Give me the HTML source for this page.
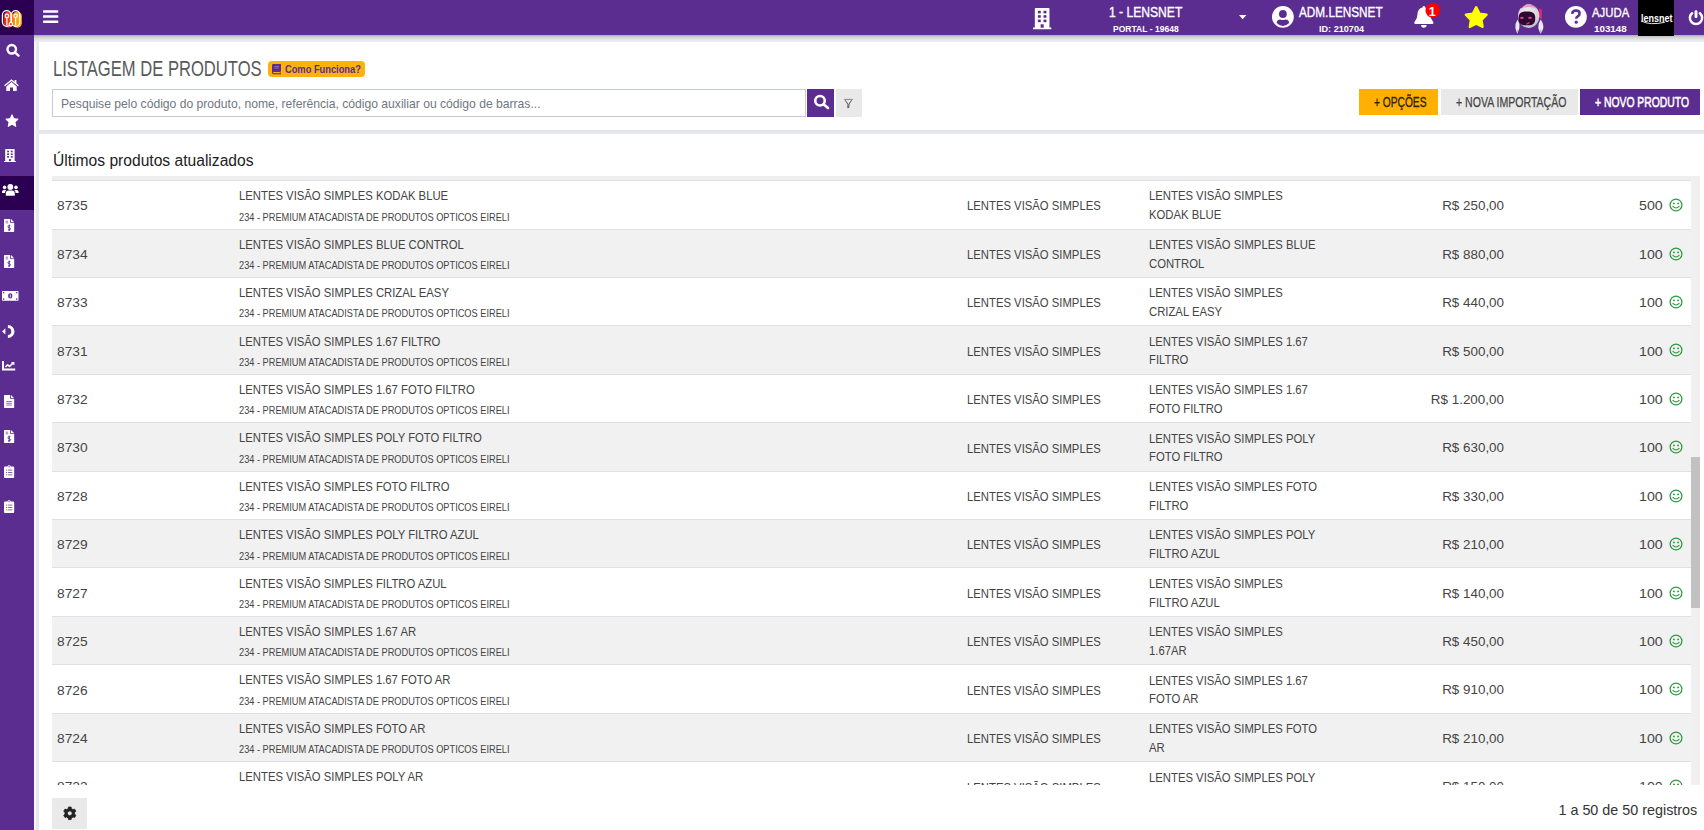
<!DOCTYPE html><html lang="pt-BR"><head><meta charset="utf-8"><title>Listagem de Produtos</title><style>
*{box-sizing:border-box}
html,body{margin:0;padding:0}
body{width:1704px;height:830px;overflow:hidden;position:relative;background:#fff;font-family:"Liberation Sans",sans-serif;}
.t{position:absolute;white-space:nowrap;line-height:1;transform-origin:0 0;display:block}
.a{position:absolute}
svg{position:absolute;overflow:visible}
</style></head><body>
<div class="a" style="left:34px;top:35px;width:1670px;height:795px;background:#fff"></div>
<div class="a" style="left:34px;top:35px;width:5px;height:795px;background:linear-gradient(90deg,#f8faf9 0,#f5f7f6 38%,#e7e9ed 46%,#e8eaee 100%)"></div>
<div class="a" style="left:39px;top:130.4px;width:1665px;height:3.7px;background:linear-gradient(180deg,#e1e2e7,#e9eaee)"></div>
<div class="a" style="left:34px;top:35px;width:1670px;height:7px;background:linear-gradient(180deg,#adb0ae 0,#c4c7c6 22%,#dcdee0 50%,#e8e9ec 80%,#f0f1f4 100%)"></div>
<div class="a" style="left:267.5px;top:61.3px;width:97.5px;height:15.8px;background:#fdb10a;border-radius:4px"></div>
<svg style="left:272px;top:63.7px" width="9" height="10.2" viewBox="0 0 9 10.2"><path d="M1.4 0H9V7.6H8.4V9H9V10.2H1.4A1.4 1.4 0 0 1 0 8.8V1.4A1.4 1.4 0 0 1 1.4 0Z" fill="#5b2d90"/><rect x="1.2" y="8" width="6.6" height="1.2" fill="#fdb10a"/><rect x="2.4" y="2" width="4.6" height="0.9" fill="#9a6aa8"/><rect x="2.4" y="3.6" width="4.6" height="0.9" fill="#9a6aa8"/></svg>
<div class="a" style="left:52.4px;top:89.2px;width:753.6px;height:27.4px;border:1px solid #c6ccd4;background:#fff"></div>
<div class="a" style="left:807.3px;top:89px;width:27px;height:27.7px;background:#5b2d90"></div>
<svg style="left:807px;top:89px" width="28" height="28" viewBox="807 89 28 28"><circle cx="820" cy="100.7" r="4.75" fill="none" stroke="#fff" stroke-width="2.6"/><path d="M823.6 104.3L828 108" stroke="#fff" stroke-width="2.6" stroke-linecap="round"/></svg>
<div class="a" style="left:836.2px;top:89px;width:25.8px;height:27.7px;background:#e9e9e9"></div>
<svg style="left:836px;top:89px" width="27" height="28" viewBox="836 89 27 28"><path d="M844.2 99.4H852.8" stroke="#777" stroke-width="0.9" fill="none"/><path d="M845.2 100.2L847.9 104.2V108L848.9 107.3V104.2L851.6 100.2" stroke="#4a4a4a" stroke-width="0.95" fill="none" stroke-linejoin="round"/></svg>
<div class="a" style="left:1358.9px;top:88.9px;width:78.8px;height:26px;background:#ffb000"></div>
<div class="a" style="left:1441px;top:88.9px;width:137px;height:26px;background:#e9e9e9"></div>
<div class="a" style="left:1580px;top:88.9px;width:119.5px;height:26px;background:#5b2d90"></div>
<span class="t" style="top:58px;font-size:22.5px;color:#5a5a5a;left:53.00px;transform:scaleX(0.7372);">LISTAGEM DE PRODUTOS</span>
<span class="t" style="top:64px;font-size:11.5px;color:#5b2d90;font-weight:700;left:284.50px;transform:scaleX(0.8072);">Como Funciona?</span>
<span class="t" style="top:97px;font-size:13px;color:#6f7780;left:60.60px;transform:scaleX(0.9332);">Pesquise pelo código do produto, nome, referência, código auxiliar ou código de barras...</span>
<span class="t" style="top:95px;font-size:14.5px;color:#2a2200;-webkit-text-stroke:0.3px #2a2200;left:1373.90px;transform:scaleX(0.7043);">+ OPÇÕES</span>
<span class="t" style="top:95px;font-size:14.5px;color:#444;-webkit-text-stroke:0.25px #444;left:1456.00px;transform:scaleX(0.7270);">+ NOVA IMPORTAÇÃO</span>
<span class="t" style="top:95px;font-size:14.5px;color:#fff;-webkit-text-stroke:0.55px #fff;left:1594.70px;transform:scaleX(0.7150);">+ NOVO PRODUTO</span>
<span class="t" style="top:153px;font-size:16px;color:#222;left:52.80px;transform:scaleX(0.9760);">Últimos produtos atualizados</span>
<span class="t" style="top:803px;font-size:14.5px;color:#333;right:6.80px;transform-origin:100% 0;transform:scaleX(0.9896);">1 a 50 de 50 registros</span>
<div class="a" style="left:52px;top:176.2px;width:1638.8px;height:4.4px;background:#efeff0;border-bottom:1px solid #dcdfe4"></div>
<div class="a" style="left:0;top:181.15px;width:1704px;height:603.85px;overflow:hidden">
<div class="a" style="left:52px;top:0.0px;width:1639px;height:48.42px;background:#fff;border-bottom:1px solid #dde1e6"></div>
<span class="t" style="top:17.85px;font-size:13.5px;color:#444;left:56.70px;transform:scaleX(1.0200);">8735</span>
<span class="t" style="top:8.85px;font-size:12.8px;color:#444;left:238.80px;transform:scaleX(0.8830);">LENTES VISÃO SIMPLES KODAK BLUE</span>
<span class="t" style="top:30.85px;font-size:11px;color:#444;left:238.80px;transform:scaleX(0.8386);">234 - PREMIUM ATACADISTA DE PRODUTOS OPTICOS EIRELI</span>
<span class="t" style="top:18.85px;font-size:12.8px;color:#444;left:966.90px;transform:scaleX(0.8830);">LENTES VISÃO SIMPLES</span>
<span class="t" style="top:8.85px;font-size:12.8px;color:#444;left:1148.80px;transform:scaleX(0.8830);">LENTES VISÃO SIMPLES</span>
<span class="t" style="top:27.85px;font-size:12.8px;color:#444;left:1148.80px;transform:scaleX(0.8830);">KODAK BLUE</span>
<span class="t" style="top:17.85px;font-size:13px;color:#444;right:200.40px;transform-origin:100% 0;transform:scaleX(1.0300);">R$ 250,00</span>
<span class="t" style="top:17.85px;font-size:13px;color:#444;right:41.50px;transform-origin:100% 0;transform:scaleX(1.0900);">500</span>
<svg style="left:1669.10px;top:17.00px" width="14" height="14" viewBox="-7 -7 14 14"><circle r="5.9" fill="none" stroke="#2f9a41" stroke-width="1.25"/><circle cx="-2.1" cy="-1.6" r="0.95" fill="#2f9a41"/><circle cx="2.1" cy="-1.6" r="0.95" fill="#2f9a41"/><path d="M-3.1 1.3Q0 4.6 3.1 1.3" fill="none" stroke="#2f9a41" stroke-width="1.15" stroke-linecap="round"/></svg>
<div class="a" style="left:52px;top:48.42px;width:1639px;height:48.42px;background:#f1f1f1;border-bottom:1px solid #dde1e6"></div>
<span class="t" style="top:66.85px;font-size:13.5px;color:#444;left:56.70px;transform:scaleX(1.0200);">8734</span>
<span class="t" style="top:57.85px;font-size:12.8px;color:#444;left:238.80px;transform:scaleX(0.8830);">LENTES VISÃO SIMPLES BLUE CONTROL</span>
<span class="t" style="top:78.85px;font-size:11px;color:#444;left:238.80px;transform:scaleX(0.8386);">234 - PREMIUM ATACADISTA DE PRODUTOS OPTICOS EIRELI</span>
<span class="t" style="top:67.85px;font-size:12.8px;color:#444;left:966.90px;transform:scaleX(0.8830);">LENTES VISÃO SIMPLES</span>
<span class="t" style="top:57.85px;font-size:12.8px;color:#444;left:1148.80px;transform:scaleX(0.8830);">LENTES VISÃO SIMPLES BLUE</span>
<span class="t" style="top:76.85px;font-size:12.8px;color:#444;left:1148.80px;transform:scaleX(0.8830);">CONTROL</span>
<span class="t" style="top:66.85px;font-size:13px;color:#444;right:200.40px;transform-origin:100% 0;transform:scaleX(1.0300);">R$ 880,00</span>
<span class="t" style="top:66.85px;font-size:13px;color:#444;right:41.50px;transform-origin:100% 0;transform:scaleX(1.0900);">100</span>
<svg style="left:1669.10px;top:65.42px" width="14" height="14" viewBox="-7 -7 14 14"><circle r="5.9" fill="none" stroke="#2f9a41" stroke-width="1.25"/><circle cx="-2.1" cy="-1.6" r="0.95" fill="#2f9a41"/><circle cx="2.1" cy="-1.6" r="0.95" fill="#2f9a41"/><path d="M-3.1 1.3Q0 4.6 3.1 1.3" fill="none" stroke="#2f9a41" stroke-width="1.15" stroke-linecap="round"/></svg>
<div class="a" style="left:52px;top:96.84px;width:1639px;height:48.42px;background:#fff;border-bottom:1px solid #dde1e6"></div>
<span class="t" style="top:114.85px;font-size:13.5px;color:#444;left:56.70px;transform:scaleX(1.0200);">8733</span>
<span class="t" style="top:105.85px;font-size:12.8px;color:#444;left:238.80px;transform:scaleX(0.8830);">LENTES VISÃO SIMPLES CRIZAL EASY</span>
<span class="t" style="top:126.85px;font-size:11px;color:#444;left:238.80px;transform:scaleX(0.8386);">234 - PREMIUM ATACADISTA DE PRODUTOS OPTICOS EIRELI</span>
<span class="t" style="top:115.85px;font-size:12.8px;color:#444;left:966.90px;transform:scaleX(0.8830);">LENTES VISÃO SIMPLES</span>
<span class="t" style="top:105.85px;font-size:12.8px;color:#444;left:1148.80px;transform:scaleX(0.8830);">LENTES VISÃO SIMPLES</span>
<span class="t" style="top:124.85px;font-size:12.8px;color:#444;left:1148.80px;transform:scaleX(0.8830);">CRIZAL EASY</span>
<span class="t" style="top:114.85px;font-size:13px;color:#444;right:200.40px;transform-origin:100% 0;transform:scaleX(1.0300);">R$ 440,00</span>
<span class="t" style="top:114.85px;font-size:13px;color:#444;right:41.50px;transform-origin:100% 0;transform:scaleX(1.0900);">100</span>
<svg style="left:1669.10px;top:113.84px" width="14" height="14" viewBox="-7 -7 14 14"><circle r="5.9" fill="none" stroke="#2f9a41" stroke-width="1.25"/><circle cx="-2.1" cy="-1.6" r="0.95" fill="#2f9a41"/><circle cx="2.1" cy="-1.6" r="0.95" fill="#2f9a41"/><path d="M-3.1 1.3Q0 4.6 3.1 1.3" fill="none" stroke="#2f9a41" stroke-width="1.15" stroke-linecap="round"/></svg>
<div class="a" style="left:52px;top:145.26px;width:1639px;height:48.42px;background:#f1f1f1;border-bottom:1px solid #dde1e6"></div>
<span class="t" style="top:163.85px;font-size:13.5px;color:#444;left:56.70px;transform:scaleX(1.0200);">8731</span>
<span class="t" style="top:154.85px;font-size:12.8px;color:#444;left:238.80px;transform:scaleX(0.8830);">LENTES VISÃO SIMPLES 1.67 FILTRO</span>
<span class="t" style="top:175.85px;font-size:11px;color:#444;left:238.80px;transform:scaleX(0.8386);">234 - PREMIUM ATACADISTA DE PRODUTOS OPTICOS EIRELI</span>
<span class="t" style="top:164.85px;font-size:12.8px;color:#444;left:966.90px;transform:scaleX(0.8830);">LENTES VISÃO SIMPLES</span>
<span class="t" style="top:154.85px;font-size:12.8px;color:#444;left:1148.80px;transform:scaleX(0.8830);">LENTES VISÃO SIMPLES 1.67</span>
<span class="t" style="top:172.85px;font-size:12.8px;color:#444;left:1148.80px;transform:scaleX(0.8830);">FILTRO</span>
<span class="t" style="top:163.85px;font-size:13px;color:#444;right:200.40px;transform-origin:100% 0;transform:scaleX(1.0300);">R$ 500,00</span>
<span class="t" style="top:163.85px;font-size:13px;color:#444;right:41.50px;transform-origin:100% 0;transform:scaleX(1.0900);">100</span>
<svg style="left:1669.10px;top:162.26px" width="14" height="14" viewBox="-7 -7 14 14"><circle r="5.9" fill="none" stroke="#2f9a41" stroke-width="1.25"/><circle cx="-2.1" cy="-1.6" r="0.95" fill="#2f9a41"/><circle cx="2.1" cy="-1.6" r="0.95" fill="#2f9a41"/><path d="M-3.1 1.3Q0 4.6 3.1 1.3" fill="none" stroke="#2f9a41" stroke-width="1.15" stroke-linecap="round"/></svg>
<div class="a" style="left:52px;top:193.68px;width:1639px;height:48.42px;background:#fff;border-bottom:1px solid #dde1e6"></div>
<span class="t" style="top:211.85px;font-size:13.5px;color:#444;left:56.70px;transform:scaleX(1.0200);">8732</span>
<span class="t" style="top:202.85px;font-size:12.8px;color:#444;left:238.80px;transform:scaleX(0.8830);">LENTES VISÃO SIMPLES 1.67 FOTO FILTRO</span>
<span class="t" style="top:223.85px;font-size:11px;color:#444;left:238.80px;transform:scaleX(0.8386);">234 - PREMIUM ATACADISTA DE PRODUTOS OPTICOS EIRELI</span>
<span class="t" style="top:212.85px;font-size:12.8px;color:#444;left:966.90px;transform:scaleX(0.8830);">LENTES VISÃO SIMPLES</span>
<span class="t" style="top:202.85px;font-size:12.8px;color:#444;left:1148.80px;transform:scaleX(0.8830);">LENTES VISÃO SIMPLES 1.67</span>
<span class="t" style="top:221.85px;font-size:12.8px;color:#444;left:1148.80px;transform:scaleX(0.8830);">FOTO FILTRO</span>
<span class="t" style="top:211.85px;font-size:13px;color:#444;right:200.40px;transform-origin:100% 0;transform:scaleX(1.0300);">R$ 1.200,00</span>
<span class="t" style="top:211.85px;font-size:13px;color:#444;right:41.50px;transform-origin:100% 0;transform:scaleX(1.0900);">100</span>
<svg style="left:1669.10px;top:210.68px" width="14" height="14" viewBox="-7 -7 14 14"><circle r="5.9" fill="none" stroke="#2f9a41" stroke-width="1.25"/><circle cx="-2.1" cy="-1.6" r="0.95" fill="#2f9a41"/><circle cx="2.1" cy="-1.6" r="0.95" fill="#2f9a41"/><path d="M-3.1 1.3Q0 4.6 3.1 1.3" fill="none" stroke="#2f9a41" stroke-width="1.15" stroke-linecap="round"/></svg>
<div class="a" style="left:52px;top:242.10000000000002px;width:1639px;height:48.42px;background:#f1f1f1;border-bottom:1px solid #dde1e6"></div>
<span class="t" style="top:259.85px;font-size:13.5px;color:#444;left:56.70px;transform:scaleX(1.0200);">8730</span>
<span class="t" style="top:250.85px;font-size:12.8px;color:#444;left:238.80px;transform:scaleX(0.8830);">LENTES VISÃO SIMPLES POLY FOTO FILTRO</span>
<span class="t" style="top:272.85px;font-size:11px;color:#444;left:238.80px;transform:scaleX(0.8386);">234 - PREMIUM ATACADISTA DE PRODUTOS OPTICOS EIRELI</span>
<span class="t" style="top:261.85px;font-size:12.8px;color:#444;left:966.90px;transform:scaleX(0.8830);">LENTES VISÃO SIMPLES</span>
<span class="t" style="top:251.85px;font-size:12.8px;color:#444;left:1148.80px;transform:scaleX(0.8830);">LENTES VISÃO SIMPLES POLY</span>
<span class="t" style="top:269.85px;font-size:12.8px;color:#444;left:1148.80px;transform:scaleX(0.8830);">FOTO FILTRO</span>
<span class="t" style="top:259.85px;font-size:13px;color:#444;right:200.40px;transform-origin:100% 0;transform:scaleX(1.0300);">R$ 630,00</span>
<span class="t" style="top:259.85px;font-size:13px;color:#444;right:41.50px;transform-origin:100% 0;transform:scaleX(1.0900);">100</span>
<svg style="left:1669.10px;top:259.10px" width="14" height="14" viewBox="-7 -7 14 14"><circle r="5.9" fill="none" stroke="#2f9a41" stroke-width="1.25"/><circle cx="-2.1" cy="-1.6" r="0.95" fill="#2f9a41"/><circle cx="2.1" cy="-1.6" r="0.95" fill="#2f9a41"/><path d="M-3.1 1.3Q0 4.6 3.1 1.3" fill="none" stroke="#2f9a41" stroke-width="1.15" stroke-linecap="round"/></svg>
<div class="a" style="left:52px;top:290.52px;width:1639px;height:48.42px;background:#fff;border-bottom:1px solid #dde1e6"></div>
<span class="t" style="top:308.85px;font-size:13.5px;color:#444;left:56.70px;transform:scaleX(1.0200);">8728</span>
<span class="t" style="top:299.85px;font-size:12.8px;color:#444;left:238.80px;transform:scaleX(0.8830);">LENTES VISÃO SIMPLES FOTO FILTRO</span>
<span class="t" style="top:320.85px;font-size:11px;color:#444;left:238.80px;transform:scaleX(0.8386);">234 - PREMIUM ATACADISTA DE PRODUTOS OPTICOS EIRELI</span>
<span class="t" style="top:309.85px;font-size:12.8px;color:#444;left:966.90px;transform:scaleX(0.8830);">LENTES VISÃO SIMPLES</span>
<span class="t" style="top:299.85px;font-size:12.8px;color:#444;left:1148.80px;transform:scaleX(0.8830);">LENTES VISÃO SIMPLES FOTO</span>
<span class="t" style="top:318.85px;font-size:12.8px;color:#444;left:1148.80px;transform:scaleX(0.8830);">FILTRO</span>
<span class="t" style="top:308.85px;font-size:13px;color:#444;right:200.40px;transform-origin:100% 0;transform:scaleX(1.0300);">R$ 330,00</span>
<span class="t" style="top:308.85px;font-size:13px;color:#444;right:41.50px;transform-origin:100% 0;transform:scaleX(1.0900);">100</span>
<svg style="left:1669.10px;top:307.52px" width="14" height="14" viewBox="-7 -7 14 14"><circle r="5.9" fill="none" stroke="#2f9a41" stroke-width="1.25"/><circle cx="-2.1" cy="-1.6" r="0.95" fill="#2f9a41"/><circle cx="2.1" cy="-1.6" r="0.95" fill="#2f9a41"/><path d="M-3.1 1.3Q0 4.6 3.1 1.3" fill="none" stroke="#2f9a41" stroke-width="1.15" stroke-linecap="round"/></svg>
<div class="a" style="left:52px;top:338.94px;width:1639px;height:48.42px;background:#f1f1f1;border-bottom:1px solid #dde1e6"></div>
<span class="t" style="top:356.85px;font-size:13.5px;color:#444;left:56.70px;transform:scaleX(1.0200);">8729</span>
<span class="t" style="top:347.85px;font-size:12.8px;color:#444;left:238.80px;transform:scaleX(0.8830);">LENTES VISÃO SIMPLES POLY FILTRO AZUL</span>
<span class="t" style="top:369.85px;font-size:11px;color:#444;left:238.80px;transform:scaleX(0.8386);">234 - PREMIUM ATACADISTA DE PRODUTOS OPTICOS EIRELI</span>
<span class="t" style="top:357.85px;font-size:12.8px;color:#444;left:966.90px;transform:scaleX(0.8830);">LENTES VISÃO SIMPLES</span>
<span class="t" style="top:347.85px;font-size:12.8px;color:#444;left:1148.80px;transform:scaleX(0.8830);">LENTES VISÃO SIMPLES POLY</span>
<span class="t" style="top:366.85px;font-size:12.8px;color:#444;left:1148.80px;transform:scaleX(0.8830);">FILTRO AZUL</span>
<span class="t" style="top:356.85px;font-size:13px;color:#444;right:200.40px;transform-origin:100% 0;transform:scaleX(1.0300);">R$ 210,00</span>
<span class="t" style="top:356.85px;font-size:13px;color:#444;right:41.50px;transform-origin:100% 0;transform:scaleX(1.0900);">100</span>
<svg style="left:1669.10px;top:355.94px" width="14" height="14" viewBox="-7 -7 14 14"><circle r="5.9" fill="none" stroke="#2f9a41" stroke-width="1.25"/><circle cx="-2.1" cy="-1.6" r="0.95" fill="#2f9a41"/><circle cx="2.1" cy="-1.6" r="0.95" fill="#2f9a41"/><path d="M-3.1 1.3Q0 4.6 3.1 1.3" fill="none" stroke="#2f9a41" stroke-width="1.15" stroke-linecap="round"/></svg>
<div class="a" style="left:52px;top:387.36px;width:1639px;height:48.42px;background:#fff;border-bottom:1px solid #dde1e6"></div>
<span class="t" style="top:405.85px;font-size:13.5px;color:#444;left:56.70px;transform:scaleX(1.0200);">8727</span>
<span class="t" style="top:396.85px;font-size:12.8px;color:#444;left:238.80px;transform:scaleX(0.8830);">LENTES VISÃO SIMPLES FILTRO AZUL</span>
<span class="t" style="top:417.85px;font-size:11px;color:#444;left:238.80px;transform:scaleX(0.8386);">234 - PREMIUM ATACADISTA DE PRODUTOS OPTICOS EIRELI</span>
<span class="t" style="top:406.85px;font-size:12.8px;color:#444;left:966.90px;transform:scaleX(0.8830);">LENTES VISÃO SIMPLES</span>
<span class="t" style="top:396.85px;font-size:12.8px;color:#444;left:1148.80px;transform:scaleX(0.8830);">LENTES VISÃO SIMPLES</span>
<span class="t" style="top:415.85px;font-size:12.8px;color:#444;left:1148.80px;transform:scaleX(0.8830);">FILTRO AZUL</span>
<span class="t" style="top:405.85px;font-size:13px;color:#444;right:200.40px;transform-origin:100% 0;transform:scaleX(1.0300);">R$ 140,00</span>
<span class="t" style="top:405.85px;font-size:13px;color:#444;right:41.50px;transform-origin:100% 0;transform:scaleX(1.0900);">100</span>
<svg style="left:1669.10px;top:404.36px" width="14" height="14" viewBox="-7 -7 14 14"><circle r="5.9" fill="none" stroke="#2f9a41" stroke-width="1.25"/><circle cx="-2.1" cy="-1.6" r="0.95" fill="#2f9a41"/><circle cx="2.1" cy="-1.6" r="0.95" fill="#2f9a41"/><path d="M-3.1 1.3Q0 4.6 3.1 1.3" fill="none" stroke="#2f9a41" stroke-width="1.15" stroke-linecap="round"/></svg>
<div class="a" style="left:52px;top:435.78000000000003px;width:1639px;height:48.42px;background:#f1f1f1;border-bottom:1px solid #dde1e6"></div>
<span class="t" style="top:453.85px;font-size:13.5px;color:#444;left:56.70px;transform:scaleX(1.0200);">8725</span>
<span class="t" style="top:444.85px;font-size:12.8px;color:#444;left:238.80px;transform:scaleX(0.8830);">LENTES VISÃO SIMPLES 1.67 AR</span>
<span class="t" style="top:465.85px;font-size:11px;color:#444;left:238.80px;transform:scaleX(0.8386);">234 - PREMIUM ATACADISTA DE PRODUTOS OPTICOS EIRELI</span>
<span class="t" style="top:454.85px;font-size:12.8px;color:#444;left:966.90px;transform:scaleX(0.8830);">LENTES VISÃO SIMPLES</span>
<span class="t" style="top:444.85px;font-size:12.8px;color:#444;left:1148.80px;transform:scaleX(0.8830);">LENTES VISÃO SIMPLES</span>
<span class="t" style="top:463.85px;font-size:12.8px;color:#444;left:1148.80px;transform:scaleX(0.8830);">1.67AR</span>
<span class="t" style="top:453.85px;font-size:13px;color:#444;right:200.40px;transform-origin:100% 0;transform:scaleX(1.0300);">R$ 450,00</span>
<span class="t" style="top:453.85px;font-size:13px;color:#444;right:41.50px;transform-origin:100% 0;transform:scaleX(1.0900);">100</span>
<svg style="left:1669.10px;top:452.78px" width="14" height="14" viewBox="-7 -7 14 14"><circle r="5.9" fill="none" stroke="#2f9a41" stroke-width="1.25"/><circle cx="-2.1" cy="-1.6" r="0.95" fill="#2f9a41"/><circle cx="2.1" cy="-1.6" r="0.95" fill="#2f9a41"/><path d="M-3.1 1.3Q0 4.6 3.1 1.3" fill="none" stroke="#2f9a41" stroke-width="1.15" stroke-linecap="round"/></svg>
<div class="a" style="left:52px;top:484.20000000000005px;width:1639px;height:48.42px;background:#fff;border-bottom:1px solid #dde1e6"></div>
<span class="t" style="top:502.85px;font-size:13.5px;color:#444;left:56.70px;transform:scaleX(1.0200);">8726</span>
<span class="t" style="top:492.85px;font-size:12.8px;color:#444;left:238.80px;transform:scaleX(0.8830);">LENTES VISÃO SIMPLES 1.67 FOTO AR</span>
<span class="t" style="top:514.85px;font-size:11px;color:#444;left:238.80px;transform:scaleX(0.8386);">234 - PREMIUM ATACADISTA DE PRODUTOS OPTICOS EIRELI</span>
<span class="t" style="top:503.85px;font-size:12.8px;color:#444;left:966.90px;transform:scaleX(0.8830);">LENTES VISÃO SIMPLES</span>
<span class="t" style="top:493.85px;font-size:12.8px;color:#444;left:1148.80px;transform:scaleX(0.8830);">LENTES VISÃO SIMPLES 1.67</span>
<span class="t" style="top:511.85px;font-size:12.8px;color:#444;left:1148.80px;transform:scaleX(0.8830);">FOTO AR</span>
<span class="t" style="top:501.85px;font-size:13px;color:#444;right:200.40px;transform-origin:100% 0;transform:scaleX(1.0300);">R$ 910,00</span>
<span class="t" style="top:501.85px;font-size:13px;color:#444;right:41.50px;transform-origin:100% 0;transform:scaleX(1.0900);">100</span>
<svg style="left:1669.10px;top:501.20px" width="14" height="14" viewBox="-7 -7 14 14"><circle r="5.9" fill="none" stroke="#2f9a41" stroke-width="1.25"/><circle cx="-2.1" cy="-1.6" r="0.95" fill="#2f9a41"/><circle cx="2.1" cy="-1.6" r="0.95" fill="#2f9a41"/><path d="M-3.1 1.3Q0 4.6 3.1 1.3" fill="none" stroke="#2f9a41" stroke-width="1.15" stroke-linecap="round"/></svg>
<div class="a" style="left:52px;top:532.62px;width:1639px;height:48.42px;background:#f1f1f1;border-bottom:1px solid #dde1e6"></div>
<span class="t" style="top:550.85px;font-size:13.5px;color:#444;left:56.70px;transform:scaleX(1.0200);">8724</span>
<span class="t" style="top:541.85px;font-size:12.8px;color:#444;left:238.80px;transform:scaleX(0.8830);">LENTES VISÃO SIMPLES FOTO AR</span>
<span class="t" style="top:562.85px;font-size:11px;color:#444;left:238.80px;transform:scaleX(0.8386);">234 - PREMIUM ATACADISTA DE PRODUTOS OPTICOS EIRELI</span>
<span class="t" style="top:551.85px;font-size:12.8px;color:#444;left:966.90px;transform:scaleX(0.8830);">LENTES VISÃO SIMPLES</span>
<span class="t" style="top:541.85px;font-size:12.8px;color:#444;left:1148.80px;transform:scaleX(0.8830);">LENTES VISÃO SIMPLES FOTO</span>
<span class="t" style="top:560.85px;font-size:12.8px;color:#444;left:1148.80px;transform:scaleX(0.8830);">AR</span>
<span class="t" style="top:550.85px;font-size:13px;color:#444;right:200.40px;transform-origin:100% 0;transform:scaleX(1.0300);">R$ 210,00</span>
<span class="t" style="top:550.85px;font-size:13px;color:#444;right:41.50px;transform-origin:100% 0;transform:scaleX(1.0900);">100</span>
<svg style="left:1669.10px;top:549.62px" width="14" height="14" viewBox="-7 -7 14 14"><circle r="5.9" fill="none" stroke="#2f9a41" stroke-width="1.25"/><circle cx="-2.1" cy="-1.6" r="0.95" fill="#2f9a41"/><circle cx="2.1" cy="-1.6" r="0.95" fill="#2f9a41"/><path d="M-3.1 1.3Q0 4.6 3.1 1.3" fill="none" stroke="#2f9a41" stroke-width="1.15" stroke-linecap="round"/></svg>
<div class="a" style="left:52px;top:581.04px;width:1639px;height:48.42px;background:#fff;border-bottom:1px solid #dde1e6"></div>
<span class="t" style="top:598.85px;font-size:13.5px;color:#444;left:56.70px;transform:scaleX(1.0200);">8723</span>
<span class="t" style="top:589.85px;font-size:12.8px;color:#444;left:238.80px;transform:scaleX(0.8830);">LENTES VISÃO SIMPLES POLY AR</span>
<span class="t" style="top:611.85px;font-size:11px;color:#444;left:238.80px;transform:scaleX(0.8386);">234 - PREMIUM ATACADISTA DE PRODUTOS OPTICOS EIRELI</span>
<span class="t" style="top:600.85px;font-size:12.8px;color:#444;left:966.90px;transform:scaleX(0.8830);">LENTES VISÃO SIMPLES</span>
<span class="t" style="top:590.85px;font-size:12.8px;color:#444;left:1148.80px;transform:scaleX(0.8830);">LENTES VISÃO SIMPLES POLY</span>
<span class="t" style="top:608.85px;font-size:12.8px;color:#444;left:1148.80px;transform:scaleX(0.8830);">AR</span>
<span class="t" style="top:598.85px;font-size:13px;color:#444;right:200.40px;transform-origin:100% 0;transform:scaleX(1.0300);">R$ 150,00</span>
<span class="t" style="top:598.85px;font-size:13px;color:#444;right:41.50px;transform-origin:100% 0;transform:scaleX(1.0900);">100</span>
<svg style="left:1669.10px;top:598.04px" width="14" height="14" viewBox="-7 -7 14 14"><circle r="5.9" fill="none" stroke="#2f9a41" stroke-width="1.25"/><circle cx="-2.1" cy="-1.6" r="0.95" fill="#2f9a41"/><circle cx="2.1" cy="-1.6" r="0.95" fill="#2f9a41"/><path d="M-3.1 1.3Q0 4.6 3.1 1.3" fill="none" stroke="#2f9a41" stroke-width="1.15" stroke-linecap="round"/></svg>
<div class="a" style="left:1690.8px;top:0;width:9px;height:700px;background:#f0f0f0"></div>
<div class="a" style="left:1690.8px;top:276.15px;width:9px;height:150.5px;background:#c1c1c1"></div>
</div>
<div class="a" style="left:1690.8px;top:176.2px;width:9px;height:6px;background:#f0f0f0"></div>
<div class="a" style="left:52px;top:798px;width:35.3px;height:30.6px;background:#e9e9e9"></div>
<svg style="left:52px;top:798px" width="36" height="31" viewBox="52 798 36 31"><path d="M68.24 808.66L68.47 807.04L71.13 807.04L71.36 808.66L73.04 809.62L74.56 809.02L75.89 811.32L74.60 812.33L74.60 814.27L75.89 815.28L74.56 817.58L73.04 816.98L71.36 817.94L71.13 819.56L68.47 819.56L68.24 817.94L66.56 816.98L65.04 817.58L63.71 815.28L65.00 814.27L65.00 812.33L63.71 811.32L65.04 809.02L66.56 809.62ZM67.40 813.30a2.4 2.4 0 1 0 4.8 0a2.4 2.4 0 1 0 -4.8 0Z" fill="#222" fill-rule="evenodd" stroke="#222" stroke-width="0.8" stroke-linejoin="round"/></svg>
<div class="a" style="left:0;top:0;width:34px;height:830px;background:#5b2d90"></div>
<div class="a" style="left:0;top:0;width:34px;height:35px;background:#2b0052"></div>
<div class="a" style="left:0;top:175.6px;width:34px;height:34.8px;background:#2b0052"></div>
<svg style="left:0px;top:0px" width="34" height="35" viewBox="0 0 34 35"><defs><linearGradient id="lg1" x1="0" x2="1" y1="0" y2="0"><stop offset="0" stop-color="#d4281a"/><stop offset="1" stop-color="#ff6a13"/></linearGradient><linearGradient id="lg2" x1="0" x2="1" y1="0" y2="0"><stop offset="0" stop-color="#ff8400"/><stop offset="1" stop-color="#ffc41a"/></linearGradient></defs><rect x="3.6" y="11.4" width="9.8" height="16.4" rx="4.9" fill="url(#lg1)"/><rect x="12.6" y="11.4" width="9.2" height="16.4" rx="4.6" fill="url(#lg2)"/><rect x="2.4" y="10.6" width="8.6" height="15.8" rx="4.3" fill="none" stroke="#fff" stroke-width="1.25"/><rect x="11.4" y="10.6" width="8.4" height="15.8" rx="4.2" fill="none" stroke="#fff" stroke-width="1.25"/><circle cx="6.9" cy="15.9" r="1.7" fill="none" stroke="#fff" stroke-width="1.2"/><circle cx="15.6" cy="15.8" r="1.7" fill="none" stroke="#fff" stroke-width="1.2"/><circle cx="10.9" cy="24.2" r="1.7" fill="#e8501a" stroke="#fff" stroke-width="1.2"/><path d="M6.9 17.6V25.4M15.6 17.6V25.4" stroke="#fff" stroke-width="1.2"/></svg>
<svg style="left:5.8px;top:43.7px" width="13.4" height="12.6" viewBox="0 0 13.4 12.6"><circle cx="5.75" cy="5.3" r="4.25" fill="none" stroke="#fff" stroke-width="2.4"/><path d="M8.9 8.4L12.5 11.6" stroke="#fff" stroke-width="2.4" stroke-linecap="round"/></svg><svg style="left:4.2px;top:79.2px" width="15" height="12" viewBox="0 0 15 12"><path d="M7.5 0.2L0.2 6.3L1 7.2L7.5 1.9L14 7.2L14.8 6.3L12.4 4.3V1H10.6V2.8Z" fill="#fff"/><path d="M7.5 3.1L2.3 7.4V12H6V8.4H9V12H12.7V7.4Z" fill="#fff"/></svg><svg style="left:4.7px;top:113.8px" width="14" height="13.4" viewBox="0 0 14 13.4"><path d="M7.00 0.70L8.82 4.69L13.18 5.19L9.95 8.16L10.82 12.46L7.00 10.30L3.18 12.46L4.05 8.16L0.82 5.19L5.18 4.69Z" fill="#fff" stroke="#fff" stroke-width="1" stroke-linejoin="round"/></svg><svg style="left:4.2px;top:148.8px" width="11.8" height="13" viewBox="0 0 12 13" preserveAspectRatio="none"><path d="M1.2 0.6Q1.2 0 1.8 0H10.2Q10.8 0 10.8 0.6V12H12V13H0V12H1.2Z" fill="#fff"/><rect x="3.2" y="1.7" width="1.9" height="1.6" fill="#5b2d90"/><rect x="6.9" y="1.7" width="1.9" height="1.6" fill="#5b2d90"/><rect x="3.2" y="4.4" width="1.9" height="1.6" fill="#5b2d90"/><rect x="6.9" y="4.4" width="1.9" height="1.6" fill="#5b2d90"/><rect x="3.2" y="7.1000000000000005" width="1.9" height="1.6" fill="#5b2d90"/><rect x="6.9" y="7.1000000000000005" width="1.9" height="1.6" fill="#5b2d90"/><rect x="5" y="10" width="2" height="2.1" fill="#5b2d90"/></svg><svg style="left:1.7px;top:184.3px" width="16.6" height="11.8" viewBox="0 0 16.6 11.8"><circle cx="8.3" cy="3" r="2.9" fill="#fff"/><circle cx="2.6" cy="3.4" r="1.8" fill="#fff"/><circle cx="14" cy="3.4" r="1.8" fill="#fff"/><path d="M3.8 11.8V9.6Q3.8 6.6 6.6 6.6H10Q12.8 6.6 12.8 9.6V11.8Z" fill="#fff"/><path d="M0 9V7.8Q0 5.9 1.9 5.9H4.3Q3 7 3 9Z" fill="#fff"/><path d="M16.6 9V7.8Q16.6 5.9 14.7 5.9H12.3Q13.6 7 13.6 9Z" fill="#fff"/></svg><svg style="left:4.2px;top:219.2px" width="10.2" height="13" viewBox="0 0 10.2 13"><path d="M0.7 0H6.2V3.6Q6.2 4 6.6 4H10.2V12.3Q10.2 13 9.5 13H0.7Q0 13 0 12.3V0.7Q0 0 0.7 0Z" fill="#fff"/><path d="M7 0L10.2 3.2H7Z" fill="#fff"/><rect x="1.6" y="1.7" width="2.6" height="0.9" fill="#5b2d90" opacity=".7"/><rect x="1.6" y="3.4" width="2.6" height="0.9" fill="#5b2d90" opacity=".7"/><path d="M6.3 6.6Q4 6.4 4 7.7Q4 8.6 5.2 8.8Q6.5 9 6.5 9.9Q6.5 11.2 4 10.9M5.2 5.6V12" fill="none" stroke="#5b2d90" stroke-width="0.95"/></svg><svg style="left:4.2px;top:254.5px" width="10.2" height="13" viewBox="0 0 10.2 13"><path d="M0.7 0H6.2V3.6Q6.2 4 6.6 4H10.2V12.3Q10.2 13 9.5 13H0.7Q0 13 0 12.3V0.7Q0 0 0.7 0Z" fill="#fff"/><path d="M7 0L10.2 3.2H7Z" fill="#fff"/><rect x="1.6" y="1.7" width="2.6" height="0.9" fill="#5b2d90" opacity=".7"/><rect x="1.6" y="3.4" width="2.6" height="0.9" fill="#5b2d90" opacity=".7"/><path d="M6.3 6.6Q4 6.4 4 7.7Q4 8.6 5.2 8.8Q6.5 9 6.5 9.9Q6.5 11.2 4 10.9M5.2 5.6V12" fill="none" stroke="#5b2d90" stroke-width="0.95"/></svg><svg style="left:1.7px;top:290.8px" width="16.5" height="9.8" viewBox="0 0 16.5 9.8"><rect x="0" y="0" width="16.5" height="9.8" rx="0.7" fill="#fff"/><ellipse cx="8.25" cy="4.9" rx="2.1" ry="2.7" fill="#5b2d90"/><rect x="7.9" y="3.4" width="0.8" height="3" fill="#fff"/><circle cx="1.7" cy="1.7" r="0.8" fill="#5b2d90"/><circle cx="14.8" cy="1.7" r="0.8" fill="#5b2d90"/><circle cx="1.7" cy="8.1" r="0.8" fill="#5b2d90"/><circle cx="14.8" cy="8.1" r="0.8" fill="#5b2d90"/></svg><svg style="left:1.7px;top:324.8px" width="13.2" height="13" viewBox="0 0 13.2 13"><path d="M5.9 0A6.6 6.5 0 0 1 5.9 13V9.9A3.4 3.4 0 0 0 5.9 3.1Z" fill="#fff"/><path d="M0.1 6.5L3.4 3.3V9.6Z" fill="#fff"/></svg><svg style="left:1.7px;top:361.3px" width="13.2" height="9.6" viewBox="0 0 13.2 9.6"><path d="M1 0V8.6H13.2" fill="none" stroke="#fff" stroke-width="2"/><path d="M3.4 6L5.6 3.8L7.6 5.4L11 2.2" fill="none" stroke="#fff" stroke-width="1.6" stroke-linejoin="round"/><path d="M9 1H12.4V4.4Z" fill="#fff"/></svg><svg style="left:4.2px;top:394.5px" width="10.2" height="13" viewBox="0 0 10.2 13"><path d="M0.7 0H6.2V3.6Q6.2 4 6.6 4H10.2V12.3Q10.2 13 9.5 13H0.7Q0 13 0 12.3V0.7Q0 0 0.7 0Z" fill="#fff"/><path d="M7 0L10.2 3.2H7Z" fill="#fff"/><rect x="2.3" y="6" width="5.6" height="0.9" fill="#5b2d90" opacity=".75"/><rect x="2.3" y="7.8" width="5.6" height="0.9" fill="#5b2d90" opacity=".75"/><rect x="2.3" y="9.6" width="5.6" height="0.9" fill="#5b2d90" opacity=".75"/></svg><svg style="left:4.2px;top:429.9px" width="10.2" height="13" viewBox="0 0 10.2 13"><path d="M0.7 0H6.2V3.6Q6.2 4 6.6 4H10.2V12.3Q10.2 13 9.5 13H0.7Q0 13 0 12.3V0.7Q0 0 0.7 0Z" fill="#fff"/><path d="M7 0L10.2 3.2H7Z" fill="#fff"/><rect x="1.6" y="1.7" width="2.6" height="0.9" fill="#5b2d90" opacity=".7"/><rect x="1.6" y="3.4" width="2.6" height="0.9" fill="#5b2d90" opacity=".7"/><path d="M6.3 6.6Q4 6.4 4 7.7Q4 8.6 5.2 8.8Q6.5 9 6.5 9.9Q6.5 11.2 4 10.9M5.2 5.6V12" fill="none" stroke="#5b2d90" stroke-width="0.95"/></svg><svg style="left:4.2px;top:464.8px" width="10.2" height="13" viewBox="0 0 10.2 13"><path d="M1 1.6H3.4A1.75 1.75 0 0 1 6.8 1.6H9.2Q10.2 1.6 10.2 2.6V12Q10.2 13 9.2 13H1Q0 13 0 12V2.6Q0 1.6 1 1.6Z" fill="#fff"/><circle cx="5.1" cy="1.7" r="0.6" fill="#5b2d90"/><rect x="2" y="4.6" width="1.2" height="1" fill="#c05aa0"/><rect x="4.1" y="4.6" width="4.2" height="1" fill="#5b2d90" opacity=".75"/><rect x="2" y="7" width="1.2" height="1" fill="#c05aa0"/><rect x="4.1" y="7" width="4.2" height="1" fill="#5b2d90" opacity=".75"/><rect x="2" y="9.4" width="1.2" height="1" fill="#c05aa0"/><rect x="4.1" y="9.4" width="4.2" height="1" fill="#5b2d90" opacity=".75"/></svg><svg style="left:4.2px;top:500.2px" width="10.2" height="13" viewBox="0 0 10.2 13"><path d="M1 1.6H3.4A1.75 1.75 0 0 1 6.8 1.6H9.2Q10.2 1.6 10.2 2.6V12Q10.2 13 9.2 13H1Q0 13 0 12V2.6Q0 1.6 1 1.6Z" fill="#fff"/><circle cx="5.1" cy="1.7" r="0.6" fill="#5b2d90"/><rect x="2" y="4.6" width="1.2" height="1" fill="#c05aa0"/><rect x="4.1" y="4.6" width="4.2" height="1" fill="#5b2d90" opacity=".75"/><rect x="2" y="7" width="1.2" height="1" fill="#c05aa0"/><rect x="4.1" y="7" width="4.2" height="1" fill="#5b2d90" opacity=".75"/><rect x="2" y="9.4" width="1.2" height="1" fill="#c05aa0"/><rect x="4.1" y="9.4" width="4.2" height="1" fill="#5b2d90" opacity=".75"/></svg>
<div class="a" style="left:34px;top:0;width:1670px;height:35px;background:#5b2d90"></div>
<div class="a" style="left:1638.2px;top:0;width:36px;height:35.8px;background:#000"></div>
<svg style="left:42.6px;top:9.8px" width="15.3" height="13" viewBox="0 0 15.3 13"><rect x="0" y="0.2" width="15.3" height="2.5" rx="0.6" fill="#fff"/><rect x="0" y="5.3" width="15.3" height="2.5" rx="0.6" fill="#fff"/><rect x="0" y="10.4" width="15.3" height="2.5" rx="0.6" fill="#fff"/></svg><svg style="left:1033.4px;top:7.7px" width="18.3" height="21.2" viewBox="0 0 12 13" preserveAspectRatio="none"><path d="M1.2 0.6Q1.2 0 1.8 0H10.2Q10.8 0 10.8 0.6V12H12V13H0V12H1.2Z" fill="#fff"/><rect x="3.2" y="1.7" width="1.9" height="1.6" fill="#5b2d90"/><rect x="6.9" y="1.7" width="1.9" height="1.6" fill="#5b2d90"/><rect x="3.2" y="4.4" width="1.9" height="1.6" fill="#5b2d90"/><rect x="6.9" y="4.4" width="1.9" height="1.6" fill="#5b2d90"/><rect x="3.2" y="7.1000000000000005" width="1.9" height="1.6" fill="#5b2d90"/><rect x="6.9" y="7.1000000000000005" width="1.9" height="1.6" fill="#5b2d90"/><rect x="5" y="10" width="2" height="2.1" fill="#5b2d90"/></svg><svg style="left:1238.7px;top:14.5px" width="7.4" height="4.2" viewBox="0 0 7.4 4.2"><path d="M0 0H7.4L3.7 4.2Z" fill="#fff"/></svg><svg style="left:1272.1px;top:6.200000000000001px" width="21.8" height="21.8" viewBox="-10.9 -10.9 21.8 21.8"><circle r="10.9" fill="#fff"/><circle cx="0" cy="-2.9" r="3.9" fill="#5b2d90"/><path d="M-6.2 6.1Q-6.2 2.6 -2.6 2.6Q0 3.6 2.6 2.6Q6.2 2.6 6.2 6.1Q3.5 9 0 9Q-3.5 9 -6.2 6.1Z" fill="#5b2d90"/></svg><svg style="left:1413.5px;top:6.3px" width="19.7" height="21.6" viewBox="0 0 19.7 21.6"><path d="M9.85 0A1.4 1.4 0 0 1 11.2 1.5Q16 2.6 16.2 8Q16.3 13 18.9 15.6Q19.7 16.4 19.4 17.2Q19.1 18 18.2 18H1.5Q0.6 18 0.3 17.2Q0 16.4 0.8 15.6Q3.4 13 3.5 8Q3.7 2.6 8.5 1.5A1.4 1.4 0 0 1 9.85 0Z" fill="#fff"/><path d="M7.1 19.1H12.6A2.75 2.6 0 0 1 7.1 19.1Z" fill="#fff"/><circle cx="18.9" cy="4.4" r="7.4" fill="#ff0000"/></svg><svg style="left:1463.5px;top:5px" width="24" height="24" viewBox="0 0 24 24"><path d="M12.20 2.10L15.55 8.49L22.66 9.70L17.62 14.86L18.67 22.00L12.20 18.80L5.73 22.00L6.78 14.86L1.74 9.70L8.85 8.49Z" fill="#ffff00" stroke="#ffff00" stroke-width="2.2" stroke-linejoin="round"/></svg><svg style="left:1512px;top:0px" width="36" height="36" viewBox="1512 0 36 36"><defs><radialGradient id="rh" cx="0.45" cy="0.35" r="0.7"><stop offset="0" stop-color="#f2eff5"/><stop offset="0.7" stop-color="#d6d2dc"/><stop offset="1" stop-color="#b9b3c3"/></radialGradient></defs><path d="M1539 8.6L1541.9 9.6L1541.8 19.2L1539.2 17.8Z" fill="#e0246f"/><ellipse cx="1528.7" cy="16.1" rx="10.7" ry="11.8" fill="url(#rh)"/><path d="M1520 9Q1528.5 0.2 1537.4 9Q1528.6 4.8 1520 9Z" fill="#e79cc4"/><path d="M1520.4 7.4Q1522.8 4.6 1525.6 4.4Q1523.3 5.8 1521.4 8.2Z" fill="#9b2462"/><path d="M1532 4.6Q1535.4 5.6 1537 8.4Q1534.6 6.4 1532 5.6Z" fill="#c23a86"/><rect x="1518.6" y="11.4" width="16.6" height="13.9" rx="6" ry="5.6" fill="#300a2c"/><ellipse cx="1521.9" cy="17.9" rx="1.8" ry="1.15" fill="#e23aa0"/><ellipse cx="1530" cy="17.9" rx="1.8" ry="1.15" fill="#e23aa0"/><path d="M1527 23.9L1528.9 22.8" stroke="#d8308f" stroke-width="1.5" stroke-linecap="round"/><path d="M1517.6 19.6Q1520.2 24 1519.4 28Q1518.4 31.5 1517.4 33.8Q1516 31 1515.4 28Q1515 23.6 1517.6 19.6Z" fill="#ece8ef"/><path d="M1540.6 19.6Q1543.8 24 1543.3 28Q1542.4 31.5 1540.6 33.8Q1539 31 1538.3 28Q1538 23.6 1540.6 19.6Z" fill="#ece8ef"/><path d="M1516.4 30L1518.4 30L1517.4 33.8Z" fill="#b8b0c2"/><path d="M1539.6 30L1541.7 30L1540.6 33.8Z" fill="#b8b0c2"/></svg><svg style="left:1564.6999999999998px;top:6.1px" width="21.8" height="21.8" viewBox="-10.9 -10.9 21.8 21.8"><circle r="10.9" fill="#fff"/><path d="M-3.7 -3Q-3.5 -6.4 0.1 -6.4Q3.7 -6.4 3.7 -3.4Q3.7 -1.6 1.8 -0.6Q0.3 0.2 0.3 1.8" fill="none" stroke="#5b2d90" stroke-width="2.5"/><circle cx="0.3" cy="5.3" r="1.6" fill="#5b2d90"/></svg><svg style="left:1640px;top:20px" width="33" height="6" viewBox="0 0 33 6"><path d="M1.5 1.2Q10 5.6 24.5 2.4" fill="none" stroke="#fff" stroke-width="0.9" stroke-linecap="round"/></svg><svg style="left:1687.3px;top:8.5px" width="18" height="18" viewBox="-9 -9 18 18"><path d="M-3.9 -4.7A6.1 6.1 0 1 0 3.9 -4.7" fill="none" stroke="#fff" stroke-width="2.5" stroke-linecap="round"/><path d="M0 -6.4V-1.2" stroke="#fff" stroke-width="2.9" stroke-linecap="round"/></svg>
<span class="t" style="top:5px;font-size:14px;color:#fff;-webkit-text-stroke:0.35px #fff;left:1109.40px;transform:scaleX(0.8644);">1 - LENSNET</span>
<span class="t" style="top:24px;font-size:9.8px;color:#fff;font-weight:700;left:1113.40px;transform:scaleX(0.8716);">PORTAL - 19648</span>
<span class="t" style="top:5px;font-size:14px;color:#fff;-webkit-text-stroke:0.35px #fff;left:1299.20px;transform:scaleX(0.8396);">ADM.LENSNET</span>
<span class="t" style="top:24px;font-size:9.8px;color:#fff;font-weight:700;left:1318.50px;transform:scaleX(0.9284);">ID: 210704</span>
<span class="t" style="top:6px;font-size:13.5px;color:#fff;-webkit-text-stroke:0.35px #fff;left:1592.00px;transform:scaleX(0.8405);">AJUDA</span>
<span class="t" style="top:24px;font-size:9.8px;color:#fff;font-weight:700;left:1594.00px;transform:scaleX(1.0003);">103148</span>
<span class="t" style="top:13px;font-size:10.5px;color:#fff;font-weight:700;left:1640.50px;transform:scaleX(0.8569);">lensnet</span>
<span class="t" style="top:6px;font-size:12.5px;color:#fff;font-weight:700;left:1428.82px;transform-origin:50% 0;transform:scaleX(1.0000);">1</span>
</body></html>
